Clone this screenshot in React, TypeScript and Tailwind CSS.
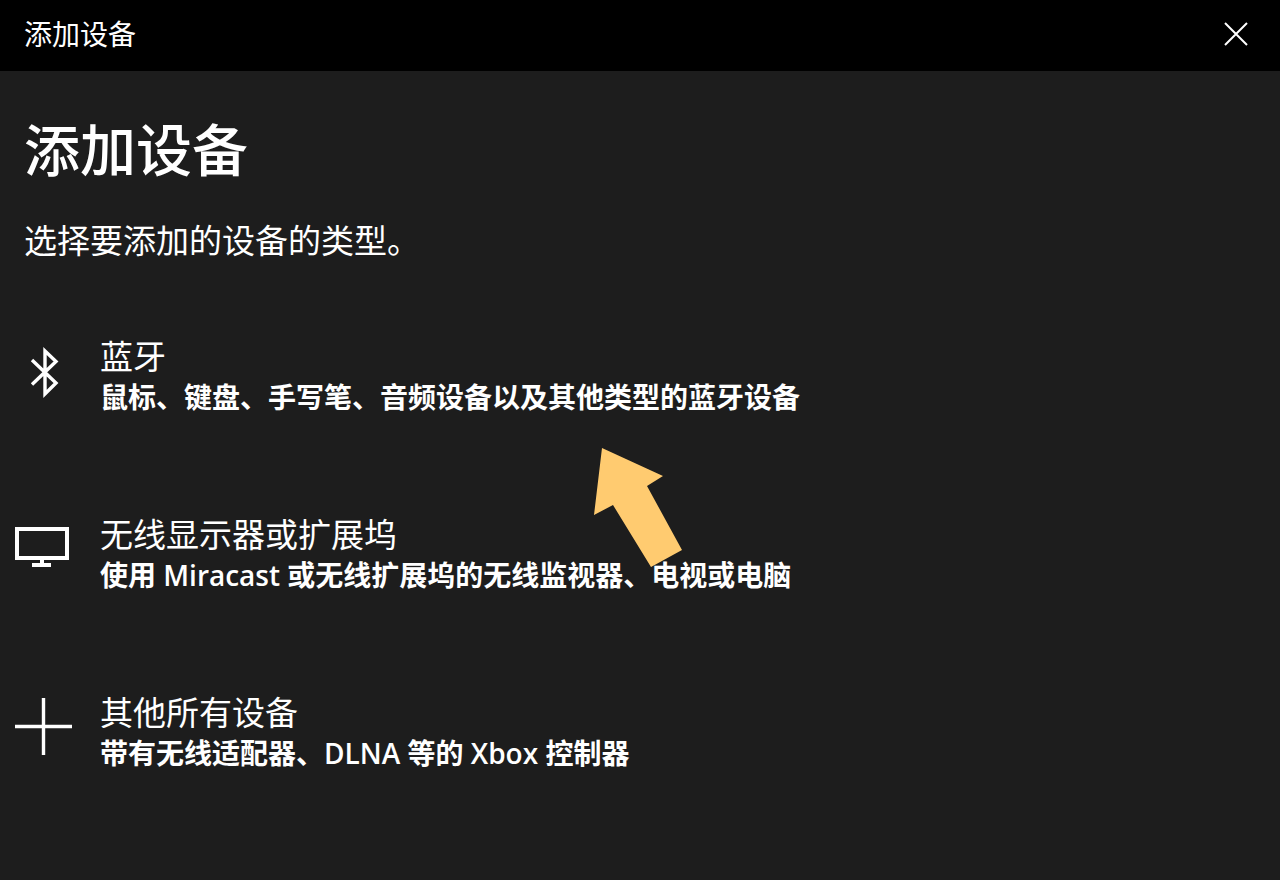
import { useState } from 'react'

type IconName = 'bluetooth' | 'display' | 'plus'

interface DeviceType {
  icon: IconName
  title: string
  description: string
}

const deviceTypes: DeviceType[] = [
  {
    icon: 'bluetooth',
    title: '蓝牙',
    description: '鼠标、键盘、手写笔、音频设备以及其他类型的蓝牙设备',
  },
  {
    icon: 'display',
    title: '无线显示器或扩展坞',
    description: '使用 Miracast 或无线扩展坞的无线监视器、电视或电脑',
  },
  {
    icon: 'plus',
    title: '其他所有设备',
    description: '带有无线适配器、DLNA 等的 Xbox 控制器',
  },
]

const iconPaths: Record<IconName, string> = {
  bluetooth: 'M19 19L43 42L32 53V10L43 20.5L19 43.5',
  display: 'M4 10H54V39H4Z M29 39V46 M19 46H38',
  plus: 'M30.5 1V58 M2 29.5H59',
}

function DeviceIcon({ name }: { name: IconName }) {
  return (
    <svg
      className="mt-1 shrink-0"
      width="60"
      height="60"
      viewBox="0 0 60 60"
      fill="none"
      stroke="currentColor"
      strokeWidth={name === 'display' ? 4 : 3.4}
      aria-hidden="true"
    >
      <path d={iconPaths[name]} />
    </svg>
  )
}

export default function App() {
  const [open, setOpen] = useState(true)

  if (!open) return null

  return (
    <div
      role="dialog"
      aria-labelledby="dialog-title"
      className="relative flex min-h-screen flex-col bg-[#1d1d1d] font-['Open_Sans','Noto_Sans_CJK_SC',sans-serif] text-white"
    >
      {/* Title bar */}
      <header className="flex h-[71px] items-center justify-between bg-black px-6 pb-[3px]">
        <span className="text-[28px] leading-8">添加设备</span>
        <button type="button" aria-label="关闭" onClick={() => setOpen(false)}>
          <svg width="40" height="40" viewBox="0 0 40 40" fill="none" stroke="currentColor" strokeWidth="2" aria-hidden="true">
            <path d="M9 9L31 31M31 9L9 31" />
          </svg>
        </button>
      </header>

      <main className="pt-[38px] pb-8">
        <h1 id="dialog-title" className="px-6 text-[56px] leading-20 font-medium">
          添加设备
        </h1>
        <p className="mt-7 px-6 text-[33px] leading-12">选择要添加的设备的类型。</p>

        {/* Device types */}
        <ul className="mt-[72px] flex flex-col gap-[98px]">
          {deviceTypes.map((device) => (
            <li key={device.title}>
              <button type="button" className="flex w-full items-start gap-[27px] pl-[13px] text-left">
                <DeviceIcon name={device.icon} />
                <span className="flex flex-col">
                  <span className="text-[33px] leading-10">{device.title}</span>
                  <span className="text-[28px] leading-10 font-semibold">{device.description}</span>
                </span>
              </button>
            </li>
          ))}
        </ul>
      </main>

      {/* Pointer to the bluetooth option */}
      <svg
        className="pointer-events-none absolute top-[448px] left-[592px]"
        width="92"
        height="120"
        viewBox="0 0 92 120"
        fill="#ffcb70"
        aria-hidden="true"
      >
        <path d="M10 0L71 28L55 38L90 102L59 119L21 57L2 67Z" />
      </svg>
    </div>
  )
}
